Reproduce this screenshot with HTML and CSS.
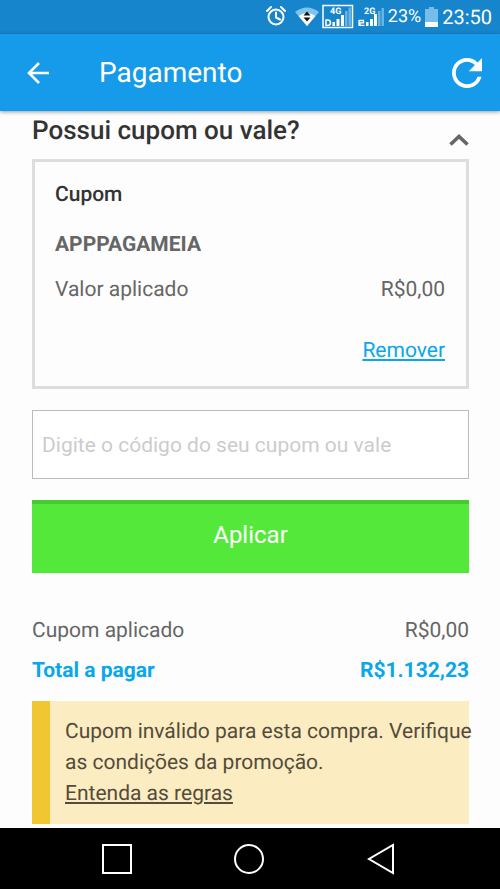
FILE: index.html
```html
<!DOCTYPE html>
<html lang="pt-BR">
<head>
<meta charset="utf-8">
<meta name="viewport" content="width=device-width, initial-scale=1">
<title>Pagamento</title>
<link rel="stylesheet" href="styles.css">
</head>
<body>
<div class="status">
  <svg class="status-icons" viewBox="0 0 118 34" width="118" height="34" aria-hidden="true">
    <g fill="none" stroke="#fff" stroke-width="2" stroke-linecap="round" stroke-linejoin="round">
      <circle cx="10" cy="17" r="7.5"/>
      <path d="M10 12.500v5l4 2M1 11l4-4M19 11l-4-4"/>
    </g>
    <path d="M29 12q12-9 24 0L41 26z" fill="#7fc4ec"/>
    <path d="M32.500 16q8.500-6 17 0L41 26z" fill="#fff"/>
    <path d="M37.500 15.500L41 11.500l3.500 4zM37.500 17.500h7L41 21.500z" fill="#111"/>
    <rect x="57" y="5.500" width="29.500" height="22" fill="none" stroke="#fff" stroke-width="1.500"/>
    <path d="M66.500 22h2.500v4h-2.500zM70.500 19h3v7h-3zM75 15h3v11h-3z" fill="#fff"/>
    <path d="M79 11h2.500v15h-2.500zM82.500 7.500h2.500v18.500h-2.500z" fill="#68b5e3"/>
    <path d="M60 20h1.500q3 0 3 2.700t-3 2.700h-1.500z" fill="none" stroke="#fff" stroke-width="1.500"/>
    <path d="M100 22h2.500v4h-2.500zM104 19h3v7h-3zM108 14h3v12h-3z" fill="#fff"/>
    <path d="M112 11h2.500v15h-2.500zM115.500 8h2.500v18h-2.500z" fill="#68b5e3"/>
    <path d="M93 20.500h4.500v2.300h-3.500v2.500h4.500M93 20v6" fill="none" stroke="#fff" stroke-width="1.300"/>
    <g class="network">
      <text x="64" y="14">4G</text>
      <text x="98" y="14">2G</text>
    </g>
  </svg>
  <span class="percent">23%</span>
  <svg viewBox="0 0 13 20" width="13" height="20" aria-hidden="true">
    <path d="M4 0h5v2h4v18H0V2h4z" fill="#75bee9"/>
    <path d="M0 15h13v5H0z" fill="#fff"/>
  </svg>
  <span class="clock">23:50</span>
</div>
<header class="bar">
  <button class="icon-button" type="button" aria-label="Voltar">
    <svg viewBox="0 0 24 24" width="24" height="24"><path d="M22 12H2.500M12 2L2 12l10 10" fill="none" stroke="#fff" stroke-width="2.600"/></svg>
  </button>
  <h1 class="title">Pagamento</h1>
  <button class="icon-button" type="button" aria-label="Atualizar">
    <svg viewBox="4 4 16 16" width="30" height="30"><path fill="#fff" d="M17.650 6.350A7.960 7.960 0 0 0 12 4c-4.420 0-7.990 3.580-7.990 8s3.570 8 7.990 8c3.730 0 6.840-2.550 7.730-6h-2.080A5.990 5.990 0 0 1 12 18c-3.310 0-6-2.690-6-6s2.690-6 6-6c1.660 0 3.140.690 4.220 1.780L13 11h7V4z"/></svg>
  </button>
</header>
<main class="content">
  <div class="section-head">
    <h2 class="section-title">Possui cupom ou vale?</h2>
    <button class="icon-button" type="button" aria-label="Recolher">
      <svg viewBox="0 0 20 12" width="20" height="12"><path d="M1.500 10.500L10 2.500l8.500 8" fill="none" stroke="#666" stroke-width="3.600"/></svg>
    </button>
  </div>
  <section class="coupon">
    <h3 class="coupon-title">Cupom</h3>
    <p class="code">APPPAGAMEIA</p>
    <div class="row"><span>Valor aplicado</span><span>R$0,00</span></div>
    <a class="remove" href="#remover">Remover</a>
  </section>
  <form class="coupon-form">
    <input class="field" type="text" placeholder="Digite o código do seu cupom ou vale" aria-label="Código do cupom ou vale">
    <button class="apply" type="button">Aplicar</button>
  </form>
  <div class="summary">
    <div class="row"><span>Cupom aplicado</span><span>R$0,00</span></div>
    <div class="row total"><span>Total a pagar</span><span>R$1.132,23</span></div>
  </div>
  <div class="warning" role="alert">
    <p class="warning-text">Cupom inválido para esta compra. Verifique<br>as condições da promoção.</p>
    <a class="rules" href="#regras">Entenda as regras</a>
  </div>
</main>
<nav class="navigation" aria-label="Sistema">
  <button class="icon-button" type="button" aria-label="Recentes">
    <svg viewBox="0 0 32 32" width="32" height="32"><path d="M2 2h28v28H2z"/></svg>
  </button>
  <button class="icon-button" type="button" aria-label="Início">
    <svg viewBox="0 0 32 32" width="32" height="32"><circle cx="16" cy="16" r="14"/></svg>
  </button>
  <button class="icon-button" type="button" aria-label="Voltar à tela anterior">
    <svg viewBox="0 0 32 32" width="32" height="32"><path d="M28 2v28L4 16z"/></svg>
  </button>
</nav>
</body>
</html>
```
FILE: styles.css
```css
* {
  box-sizing: border-box;
}

body {
  display: flex;
  flex-direction: column;
  min-height: 100vh;
  margin: 0;
  background: #fdfdfd;
  color: #666;
  font: 21px/30px Roboto, "Liberation Sans", sans-serif;
  text-rendering: geometricPrecision;
}

h1, h2, h3, p {
  margin: 0;
}

svg {
  display: block;
}

.icon-button {
  padding: 0;
  border: 0;
  background: none;
}

.status {
  display: flex;
  align-items: center;
  justify-content: flex-end;
  gap: 4px;
  height: 34px;
  padding-right: 8px;
  background: #1685cc;
  color: #fff;
}

.network {
  fill: #fff;
  font-size: 9px;
  font-weight: 700;
}

.percent {
  font-size: 18px;
}

.clock {
  font-size: 20px;
}

.bar {
  display: flex;
  align-items: center;
  height: 77px;
  padding: 0 18px 0 27px;
  background: #169bea;
  box-shadow: 0 1px 4px rgba(0, 0, 0, 0.4);
  color: #fff;
}

.title {
  flex: 1;
  margin-left: 48px;
  font-size: 28px;
  font-weight: 400;
}

.content {
  flex: 1;
  padding: 5px 31px 4px 32px;
}

.section-head {
  display: flex;
  align-items: flex-end;
  justify-content: space-between;
  height: 43px;
  padding-bottom: 13px;
}

.section-title {
  color: #333;
  font-size: 26px;
  font-weight: 500;
}

.coupon {
  padding: 18px 21px 20px 20px;
  border: 3px solid #ddd;
}

.coupon-title {
  color: #333;
  font-size: 21px;
  font-weight: 500;
}

.code {
  margin: 20px 0 15px;
  font-weight: 700;
}

.row {
  display: flex;
  justify-content: space-between;
}

.remove {
  display: block;
  width: fit-content;
  margin: 31px 0 0 auto;
  color: #0aa7ea;
}

.field {
  display: block;
  width: 100%;
  height: 69px;
  margin: 21px 0;
  padding: 0 9px;
  border: 1px solid #bbb;
  border-radius: 0;
  background: #fff;
  color: #333;
  font: inherit;
}

.field::placeholder {
  color: #ccc;
}

.apply {
  display: block;
  width: 100%;
  height: 73px;
  padding: 0 0 8px;
  border: 0;
  border-top: 4px solid #43cc2d;
  background: #54e93a;
  color: #fff;
  font: inherit;
  font-size: 24px;
}

.summary {
  display: grid;
  gap: 10px;
  padding: 43px 0 15px;
}

.total {
  color: #0aa7ea;
  font-weight: 700;
}

.warning {
  padding: 16px 0 14px 15px;
  border-left: 18px solid #f0c733;
  background: #fbecc1;
  color: #544b3a;
  line-height: 31px;
  white-space: nowrap;
}

.rules {
  color: inherit;
}

.navigation {
  display: flex;
  align-items: center;
  justify-content: space-between;
  height: 61px;
  padding: 0 103px 0 101px;
  background: #000;
}

.navigation svg {
  fill: none;
  stroke: #fff;
  stroke-width: 2;
}
```
